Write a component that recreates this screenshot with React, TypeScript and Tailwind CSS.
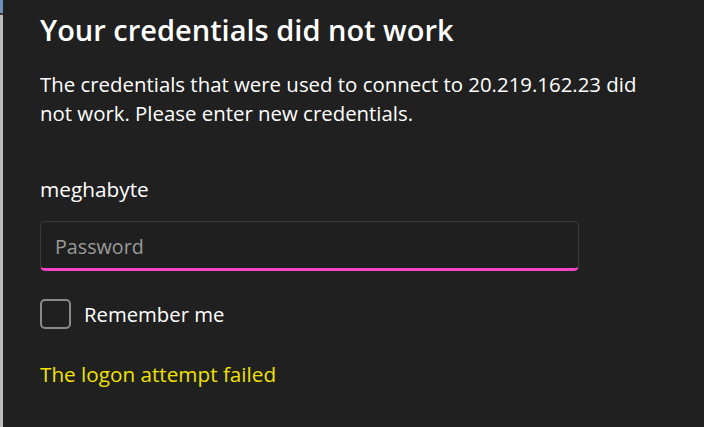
import React from "react";

export default function App() {
  return (
    <div
      className="relative flex h-[427px] w-[704px] overflow-hidden bg-[#202020]"
      style={{ fontFamily: '"Open Sans", "Noto Sans", sans-serif' }}
    >
      <div className="flex w-[3px] shrink-0 flex-col bg-[#bdbdbd]">
        <div className="h-[13px] bg-[#6d8fb8]" />
        <div className="h-[2px] bg-[#3c3c3c]" />
      </div>
      <div className="flex flex-1 flex-col pl-[37px] pt-[11px]">
        <h1 className="text-[29px] font-semibold leading-[38px] text-white">
          Your credentials did not work
        </h1>
        <p className="mt-[21px] w-[620px] text-[20.4px] leading-[29px] text-white">
          The credentials that were used to connect to 20.219.162.23 did not work. Please enter new credentials.
        </p>
        <div className="mt-[47px] text-[20.8px] leading-[28px] text-white">meghabyte</div>
        <div className="mt-[18px] flex h-[50px] w-[539px] items-center rounded-[5px] border border-[#3a3a3a] border-b-[3px] border-b-[#f545c9] bg-[#1f1f1f] pl-[14px] pt-[4px]">
          <span className="text-[19.7px] text-[#9b9b9b]">Password</span>
        </div>
        <div className="mt-[28px] flex items-center gap-[13px]">
          <div className="h-[30px] w-[31px] rounded-[5px] border-2 border-[#8a8a8a]" />
          <span className="text-[20.3px] leading-[28px] text-white">Remember me</span>
        </div>
        <div className="mt-[31px] text-[20.7px] leading-[28px] text-[#f0e200]">
          The logon attempt failed
        </div>
      </div>
    </div>
  );
}
